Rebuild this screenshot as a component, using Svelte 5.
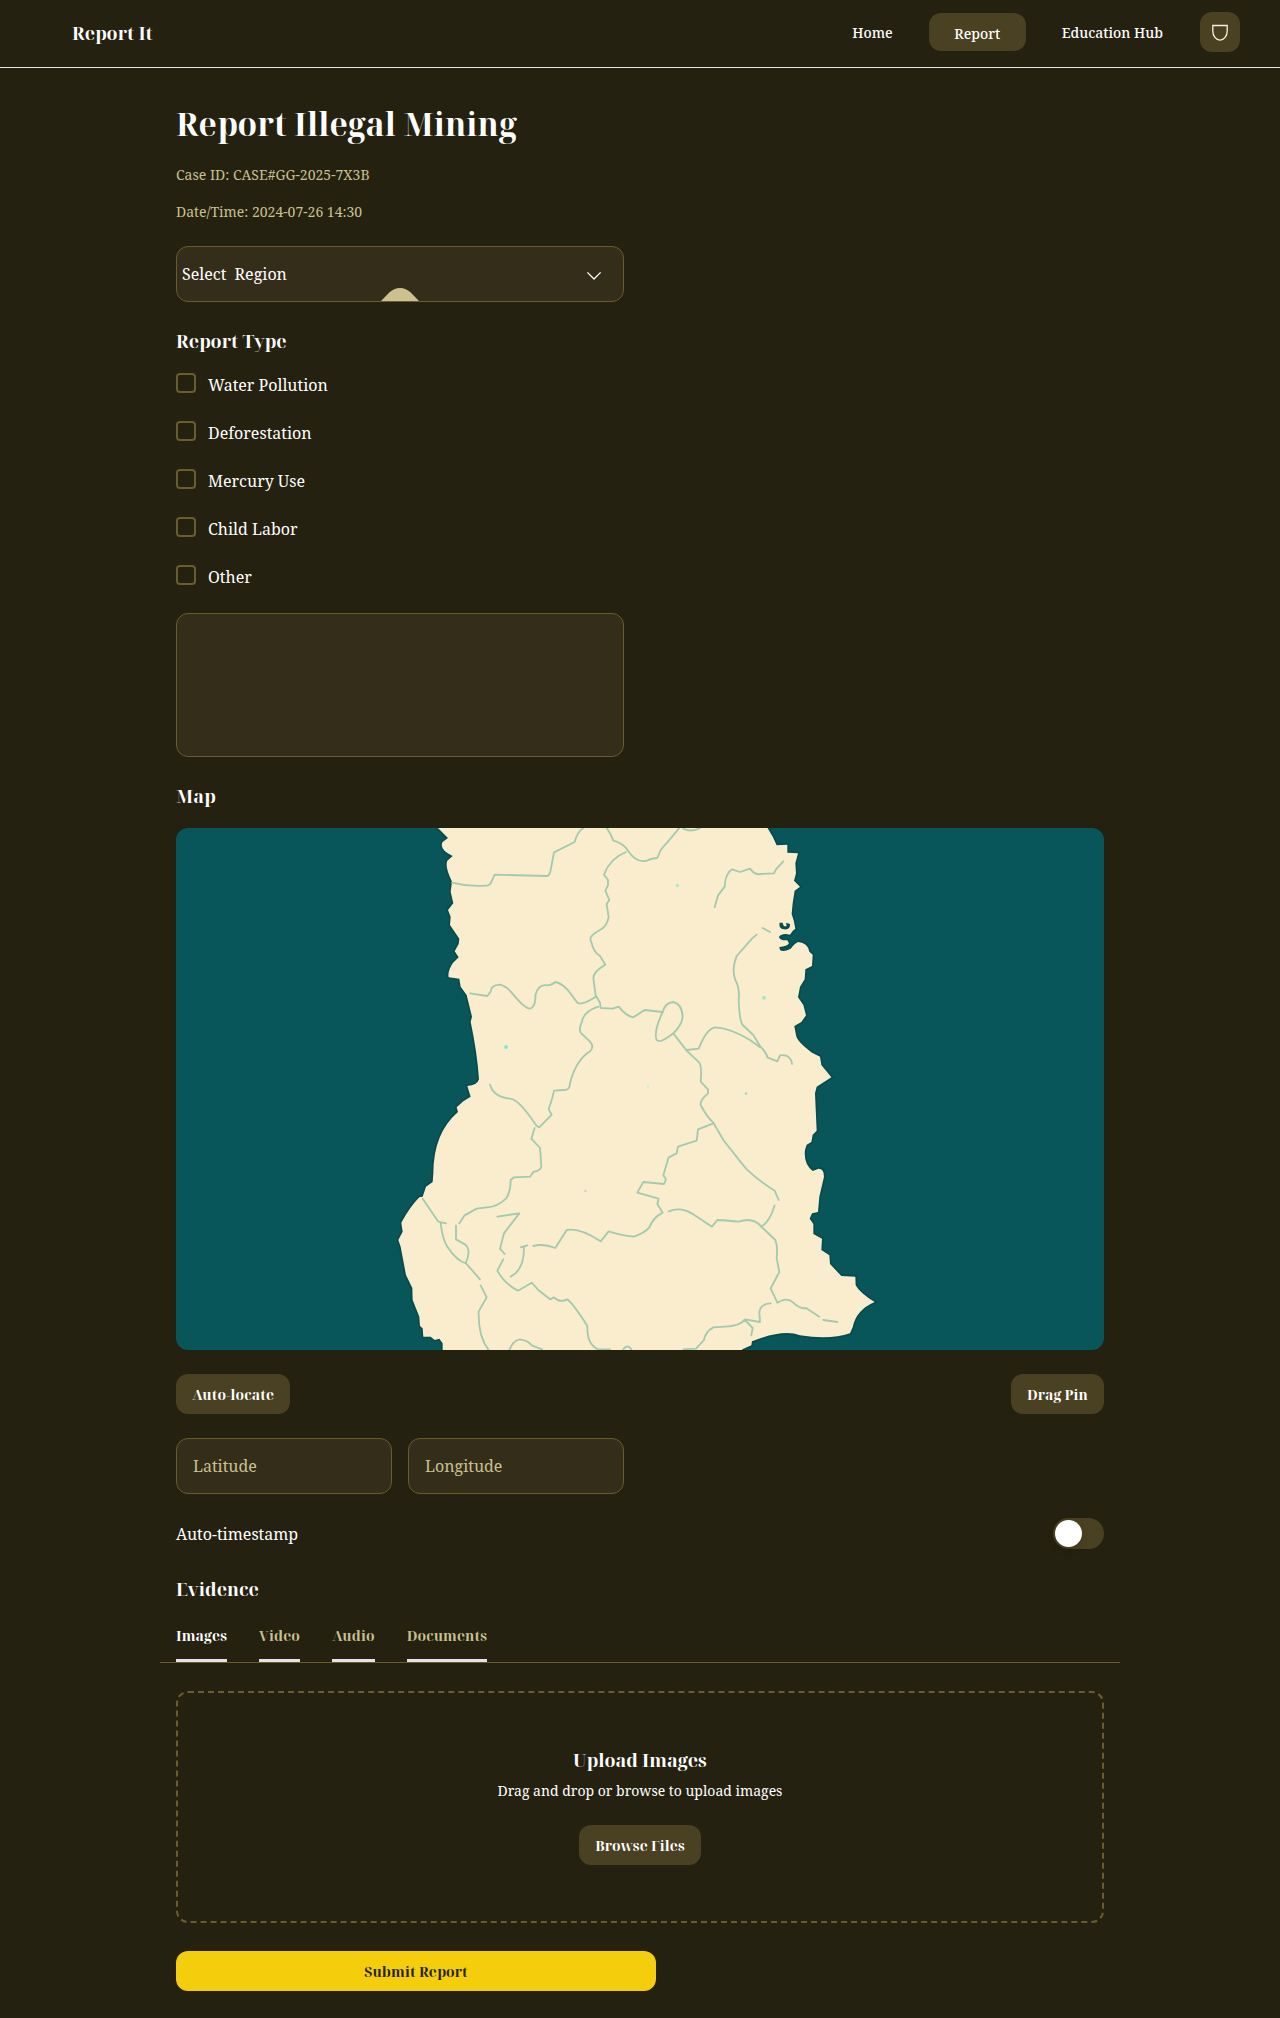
<script>
  const reportTypes = ['Water Pollution', 'Deforestation', 'Mercury Use', 'Child Labor', 'Other'];
  const tabs = ['Images', 'Video', 'Audio', 'Documents'];
  let activeTab = $state('Images');

  // Map geometry, in thirds of a pixel
  const land =
    'M200 20 L234 54 L218 66 Q206 88 248 108 L232 122 Q224 140 246 185 L242 215 L250 250 L234 270 L242 290 L240 315 L268 356 L266 372 L254 394 L266 412 L248 430 Q232 455 236 472 L268 476 L272 500 L290 525 L306 590 L302 605 Q322 700 327 778 Q322 796 292 798 L302 830 L280 844 L260 862 L264 876 Q190 940 190 1060 L188 1086 L168 1100 L158 1130 L148 1132 Q120 1160 94 1208 L98 1235 L85 1260 L92 1280 L108 1365 L127 1404 L128 1440 L148 1490 L150 1518 L158 1525 L160 1550 L182 1550 L194 1560 L208 1556 L218 1570 L218 1600 L1110 1600 L1117 1588 L1144 1576 L1146 1564 Q1240 1526 1290 1546 Q1380 1560 1440 1540 L1448 1522 Q1458 1470 1514 1446 Q1470 1420 1457 1396 L1456 1370 L1414 1368 L1380 1332 L1378 1306 L1354 1290 L1356 1256 L1330 1242 L1330 1212 L1319 1196 L1326 1180 L1344 1176 L1348 1130 L1362 1070 Q1362 1046 1346 1046 L1328 1053 Q1300 1030 1305 990 L1310 974 L1324 966 L1328 944 L1340 932 L1335 820 L1340 800 L1384 772 L1354 735 L1350 710 L1326 698 Q1280 664 1278 645 L1273 618 L1294 606 L1308 586 L1300 555 L1284 532 L1290 500 L1304 478 L1306 448 L1326 438 L1328 404 L1318 395 Q1314 370 1285 366 Q1276 368 1262 386 Q1240 398 1230 390 L1228 381 Q1252 380 1257 370 L1252 361 Q1228 362 1227 350 Q1236 338 1260 344 Q1266 332 1276 326 Q1272 300 1265 282 L1268 250 L1274 212 L1290 200 L1272 182 L1278 160 L1276 130 L1284 100 L1252 98 L1252 74 L1220 76 Q1210 50 1190 20 Z';
  const borders = [
    'M246 188 Q300 202 355 196 L362 190 L374 164 L530 168 Q540 168 543 145 L552 97 L614 66 Q622 35 640 24 M710 24 Q722 40 730 62 Q760 70 774 92 Q800 130 830 122 Q845 114 862 114 L872 90 L902 55 L928 24 M940 26 Q965 38 990 24',
    'M768 96 Q720 115 702 164 L714 180 L714 196 L706 212 L718 240 L710 252 L716 292 Q710 320 690 330 Q652 350 664 366 Q670 396 690 408 L706 434 Q670 455 670 475 L677 526 L690 548 L692 564 L728 566 L746 560 Q770 590 790 592 L824 570 L878 576',
    'M300 520 L352 528 L362 515 Q362 495 390 494 Q410 498 430 524 Q465 566 480 566 Q498 560 496 525 Q506 492 530 496 Q545 496 556 486 Q580 490 605 525 L622 548 Q634 558 677 530',
    'M685 560 Q640 575 636 605 Q624 630 634 640 L660 665 Q674 680 660 694 Q618 720 600 790 Q600 812 580 810 L552 812 L548 830 L536 868 L545 884 L508 922 L500 918 Q445 836 420 836 Q370 830 360 794',
    'M494 924 L484 956 L510 984 L514 1040 Q512 1052 490 1056 L480 1070 L432 1072 L422 1080 Q422 1115 408 1136 Q380 1162 350 1162 L320 1166 L284 1186 L268 1210 M158 1136 L205 1205 L228 1210 M212 1210 Q218 1260 232 1280 Q260 1322 288 1330 L330 1378 M258 1216 L258 1258 L286 1274 Q304 1290 288 1328 M332 1396 L350 1432 L326 1474 Q324 1550 356 1590',
    'M382 1190 L448 1180 L402 1240 L390 1286 L404 1302 M400 1318 L382 1352 Q402 1390 444 1412 L485 1388 L505 1410 L540 1438 L552 1432 Q570 1450 592 1438 Q610 1452 652 1518 Q650 1572 684 1588 L720 1588 M452 1282 L472 1276 M462 1284 Q462 1350 422 1370',
    'M490 1278 Q520 1270 556 1284 L590 1230 Q630 1222 692 1264 L716 1234 Q750 1246 792 1250 Q825 1238 838 1222 Q850 1192 878 1178 L862 1152 L866 1136 L802 1118 L820 1086 L882 1092 L888 1078 L880 1066 L896 1012 L920 1000 L924 980 L980 962 L984 928 L1030 910',
    'M878 576 Q885 548 910 546 Q936 552 938 590 Q936 615 910 640 Q870 672 860 660 Q850 636 878 576 M910 640 L950 692 L988 728 Q996 740 992 785 L1014 808 L1014 820 Q990 840 992 855 Q1010 890 1030 908 L1060 960 L1120 1036 L1130 1048 Q1170 1085 1214 1112 L1226 1140 M1214 1156 Q1200 1205 1174 1220',
    'M896 1174 Q930 1160 965 1180 L1026 1220 L1042 1200 Q1080 1202 1105 1205 Q1150 1190 1174 1220 L1216 1260 Q1224 1280 1220 1315 L1228 1356 L1202 1405 L1222 1448 M1222 1448 Q1250 1430 1270 1448 Q1290 1468 1308 1464 L1348 1490 M1360 1500 L1402 1506 M1202 1450 Q1170 1452 1168 1478 L1170 1506 L1125 1498 Q1110 1518 1065 1520 L1030 1522 Q1006 1535 1002 1560 L978 1586 L940 1588 M1125 1500 L1148 1524 L1144 1546',
    'M950 690 L986 686 Q1010 625 1036 622 Q1080 624 1140 660 L1170 682 M1160 344 L1146 356 L1100 408 Q1084 450 1096 480 Q1110 505 1106 540 Q1108 600 1118 615 L1150 645 L1170 678 Q1190 700 1192 712 L1222 724 L1230 706 Q1262 702 1266 732 M1178 324 L1200 336',
    'M1034 262 L1044 226 L1064 200 Q1066 160 1086 148 L1110 156 L1140 146 Q1155 166 1170 162 L1212 160 L1218 148 L1240 124',
    'M418 1590 Q430 1560 450 1558 Q475 1562 485 1576 L516 1588 M760 1588 Q772 1570 784 1588',
  ];
  const dots = [
    { x: 408, y: 681, r: 6, c: '#7fead2' },
    { x: 922, y: 196, r: 5, c: '#a8e8cd' },
    { x: 1182, y: 533, r: 6, c: '#a4e6c8' },
    { x: 1128, y: 821, r: 4, c: '#9fdcc0' },
    { x: 834, y: 799, r: 4, c: '#d5ecd0' },
    { x: 646, y: 1113, r: 4, c: '#c5dcbd' },
  ];
</script>

<header>
  <div class="brand">Report It</div>
  <nav>
    <span class="link home">Home</span>
    <span class="link current">Report</span>
    <span class="link">Education Hub</span>
    <button class="shield" aria-label="Safety">
      <svg viewBox="0 0 40 40" width="40" height="40">
        <path d="M12.800 13.500h14.400v5.500c0 5-3.200 9.200-7.200 9.200s-7.200-4.200-7.200-9.200z" />
      </svg>
    </button>
  </nav>
</header>

<main>
  <h1>Report Illegal Mining</h1>
  <p class="meta">Case ID: CASE#GG-2025-7X3B</p>
  <p class="meta">Date/Time: 2024-07-26 14:30</p>

  <div class="field select">
    <span>Select&nbsp; Region</span>
    <svg class="chevron" viewBox="0 0 16 10" width="16" height="10"><path d="M1.400 1.400 8 8l6.600-6.600" /></svg>
    <svg class="bump" viewBox="0 0 40 14" width="40" height="14"><path d="M1 14 9 5.800Q14 1 20 1T31 5.800L39 14z" /></svg>
  </div>

  <h2>Report Type</h2>
  {#each reportTypes as type}
    <label class="check"><input type="checkbox" /><span>{type}</span></label>
  {/each}
  <textarea class="field notes" aria-label="Details"></textarea>

  <h2>Map</h2>
  <div class="map">
    <svg viewBox="-582 24 2784 1566" preserveAspectRatio="none">
      <rect x="-582" y="24" width="2784" height="1566" fill="#08565a" />
      <path class="shade" d={land} />
      <path class="land" d={land} />
      <path class="inlet" d="M1229 308Q1224 326 1242 328Q1262 330 1260 312L1248 308L1250 318Q1240 322 1238 308z" />
      {#each borders as d}
        <path class="border" {d} />
      {/each}
      {#each dots as p}
        <circle cx={p.x} cy={p.y} r={p.r} fill={p.c} />
      {/each}
    </svg>
  </div>

  <div class="row between actions">
    <button class="btn">Auto-locate</button>
    <button class="btn">Drag Pin</button>
  </div>
  <div class="row coords">
    <input class="field" placeholder="Latitude" />
    <input class="field" placeholder="Longitude" />
  </div>
  <div class="row between stamp">
    <span>Auto-timestamp</span>
    <span class="toggle"><i></i></span>
  </div>

  <h2 class="evidence">Evidence</h2>
  <div class="tabs">
    {#each tabs as tab}
      <button class="tab" class:active={tab === activeTab} onclick={() => (activeTab = tab)}>{tab}</button>
    {/each}
  </div>
  <div class="drop">
    <h3>Upload Images</h3>
    <p>Drag and drop or browse to upload images</p>
    <button class="btn">Browse Files</button>
  </div>
  <button class="btn submit">Submit Report</button>
</main>

<style>
  :global(body) {
    margin: 0;
    background: #242110;
    color: #fff;
    font-family: 'Noto Serif', 'DejaVu Serif Condensed', serif;
  }
  :global(#app) { height: 2018px; overflow: hidden; }
  * { box-sizing: border-box; }
  button, input, textarea { font: inherit; color: inherit; margin: 0; outline: none; }
  header {
    display: flex;
    align-items: center;
    justify-content: space-between;
    height: 68px;
    padding: 0 40px 3px 72px;
    border-bottom: 1px solid #e5e3e8;
  }
  .brand {
    font: 700 18px/23px 'Noto Serif Display', 'Noto Serif', serif;
    padding-top: 3px;
  }
  nav { display: flex; align-items: center; }
  .link { font-size: 14px; line-height: 21px; font-weight: 500; margin-right: 37px; }
  .link.home { margin-right: 36px; }
  .link.current {
    width: 97px;
    height: 38px;
    padding-top: 10px;
    border-radius: 12px;
    background: #4a4122;
    text-align: center;
    margin-right: 36px;
  }
  .shield { width: 40px; height: 40px; padding: 0; border: 0; border-radius: 12px; background: #4a4122; }
  .shield svg { display: block; fill: none; stroke: #f4efe2; stroke-width: 1.3; }

  main { display: flex; flex-direction: column; width: 928px; margin: 0 auto; padding-top: 36px; }
  h1, h2, h3, p { margin: 0; }
  h1, h2, h3, .btn, .tab { font-family: 'Noto Serif Display', 'Noto Serif', serif; font-weight: 700; }
  h1 { font-size: 32px; line-height: 40px; margin-bottom: 20px; }
  h2 { font-size: 18px; line-height: 23px; padding: 28px 0 8px; }
  .meta { font-size: 14px; line-height: 21px; color: #cac08f; margin-bottom: 16px; }
  .field { background: #342d1a; border: 1px solid #695c2e; border-radius: 12px; }
  .select {
    position: relative;
    display: flex;
    align-items: center;
    justify-content: space-between;
    width: 448px;
    height: 56px;
    margin-top: 8px;
    padding: 0 21px 0 5px;
    font-size: 16px;
  }
  .chevron { fill: none; stroke: #fff; stroke-width: 1.3; margin-top: 4px; }
  .bump { position: absolute; left: 203px; bottom: 0; fill: #cdc28f; }
  .check { display: flex; height: 48px; padding-top: 12px; gap: 12px; font-size: 16px; line-height: 24px; }
  .check input { appearance: none; width: 20px; height: 20px; border: 2px solid #695c2e; border-radius: 4px; }
  .notes { width: 448px; height: 144px; margin-top: 12px; resize: none; }
  .map { height: 522px; margin-top: 12px; border-radius: 12px; overflow: hidden; }
  .map svg { display: block; width: 928px; height: 522px; }
  .land { fill: #faedcd; }
  .shade { fill: none; stroke: #034448; stroke-width: 10; opacity: 0.6; }
  .inlet { fill: #064e52; }
  .border { fill: none; stroke: #a3caae; stroke-width: 5.500; stroke-linejoin: round; stroke-linecap: round; }

  .row { display: flex; }
  .between { justify-content: space-between; }
  .btn {
    height: 40px;
    padding: 0 16px;
    border: 0;
    border-radius: 12px;
    background: #4a4122;
    font-size: 14px;
    line-height: 21px;
    letter-spacing: 0.08px;
  }
  .actions { margin-top: 24px; }
  .coords { gap: 16px; margin-top: 24px; }
  .coords input { width: 216px; height: 56px; padding: 0 16px; font-size: 16px; }
  .coords input::placeholder { color: #cac08f; opacity: 1; }
  .stamp { align-items: center; height: 31px; margin-top: 24px; font-size: 16px; line-height: 24px; }
  .toggle { width: 51px; height: 31px; padding: 2px; border-radius: 16px; background: #4a4122; }
  .toggle i {
    display: block;
    width: 27px;
    height: 27px;
    border-radius: 50%;
    background: #fff;
    box-shadow: 0 3px 8px rgba(0, 0, 0, 0.15);
  }
  .evidence { padding-top: 29px; }
  .tabs { display: flex; gap: 32px; margin: 0 -16px; padding: 16px 16px 0; border-bottom: 1px solid #695c2e; }
  .tab {
    padding: 0 0 13px;
    border: 0;
    border-bottom: 3px solid #e5e3e8;
    background: none;
    color: #cac08f;
    font-size: 14px;
    line-height: 21px;
    letter-spacing: 0.1px;
  }
  .tab.active { color: #fff; }
  .drop {
    display: flex;
    flex-direction: column;
    align-items: center;
    height: 232px;
    margin-top: 28px;
    padding-top: 56px;
    border: 2px dashed #695c2e;
    border-radius: 12px;
  }
  h3 { font-size: 18px; line-height: 23px; margin-bottom: 8px; }
  .drop p { font-size: 14px; line-height: 21px; margin-bottom: 24px; }
  .submit { width: 480px; margin-top: 28px; background: #f4cd0d; color: #242110; }
</style>
